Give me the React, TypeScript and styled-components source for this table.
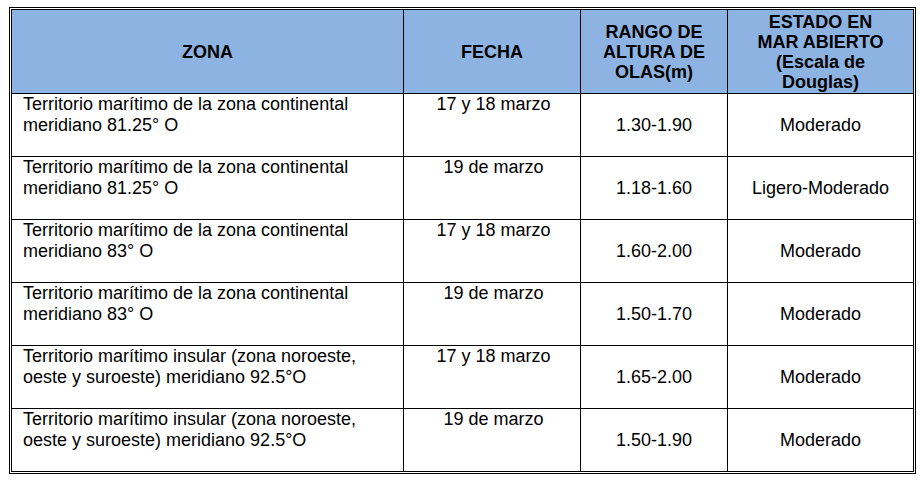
import styled, { createGlobalStyle } from "styled-components";

const GlobalStyle = createGlobalStyle`
    body {
        margin: 0;
        background: #ffffff;
        font-family: "Liberation Sans", Arial, sans-serif;
        color: #000000;
    }
`;

const Frame = styled.div`
    margin: 7px 0 0 9px;
    width: 907px;
    border: 3px double #000;
    box-sizing: border-box;
`;

const Grid = styled.div`
    display: grid;
    grid-template-columns: 391px 177px 147px 186px;
    grid-template-rows: 83px repeat(6, 63px);
`;

type CellProps = {
    $first?: boolean;
};

const HeadCell = styled.div<CellProps>`
    display: flex;
    align-items: center;
    justify-content: center;
    text-align: center;
    background: #8db3e2;
    font-weight: 700;
    font-size: 18px;
    line-height: 20px;
    border-left: ${(p) => (p.$first ? "none" : "1px solid #000")};
`;

const Cell = styled.div<CellProps & { $align: "left" | "center"; $middle?: boolean }>`
    display: flex;
    flex-direction: column;
    justify-content: ${(p) => (p.$middle ? "center" : "flex-start")};
    text-align: ${(p) => p.$align};
    font-size: 18px;
    line-height: 21px;
    padding: ${(p) => (p.$middle ? "0 6px" : "0 8px 0 11px")};
    border-top: 1px solid #000;
    border-left: ${(p) => (p.$first ? "none" : "1px solid #000")};
`;

type Row = {
    zona: string[];
    fecha: string;
    rango: string;
    estado: string;
};

const rows: Row[] = [
    {
        zona: ["Territorio marítimo de la zona continental", "meridiano 81.25° O"],
        fecha: "17 y 18 marzo",
        rango: "1.30-1.90",
        estado: "Moderado",
    },
    {
        zona: ["Territorio marítimo de la zona continental", "meridiano 81.25° O"],
        fecha: "19 de marzo",
        rango: "1.18-1.60",
        estado: "Ligero-Moderado",
    },
    {
        zona: ["Territorio marítimo de la zona continental", "meridiano 83° O"],
        fecha: "17 y 18 marzo",
        rango: "1.60-2.00",
        estado: "Moderado",
    },
    {
        zona: ["Territorio marítimo de la zona continental", "meridiano 83° O"],
        fecha: "19 de marzo",
        rango: "1.50-1.70",
        estado: "Moderado",
    },
    {
        zona: ["Territorio marítimo insular (zona noroeste,", "oeste y suroeste) meridiano 92.5°O"],
        fecha: "17 y 18 marzo",
        rango: "1.65-2.00",
        estado: "Moderado",
    },
    {
        zona: ["Territorio marítimo insular (zona noroeste,", "oeste y suroeste) meridiano 92.5°O"],
        fecha: "19 de marzo",
        rango: "1.50-1.90",
        estado: "Moderado",
    },
];

export default function App() {
    return (
        <>
            <GlobalStyle />
            <Frame>
                <Grid>
                    <HeadCell $first>ZONA</HeadCell>
                    <HeadCell>FECHA</HeadCell>
                    <HeadCell>
                        RANGO DE
                        <br />
                        ALTURA DE
                        <br />
                        OLAS(m)
                    </HeadCell>
                    <HeadCell>
                        ESTADO EN
                        <br />
                        MAR ABIERTO
                        <br />
                        (Escala de
                        <br />
                        Douglas)
                    </HeadCell>
                    {rows.map((r, i) => [
                        <Cell key={`z${i}`} $first $align="left">
                            {r.zona.map((line) => (
                                <span key={line}>{line}</span>
                            ))}
                        </Cell>,
                        <Cell key={`f${i}`} $align="center">
                            {r.fecha}
                        </Cell>,
                        <Cell key={`r${i}`} $align="center" $middle>
                            {r.rango}
                        </Cell>,
                        <Cell key={`e${i}`} $align="center" $middle>
                            {r.estado}
                        </Cell>,
                    ])}
                </Grid>
            </Frame>
        </>
    );
}
